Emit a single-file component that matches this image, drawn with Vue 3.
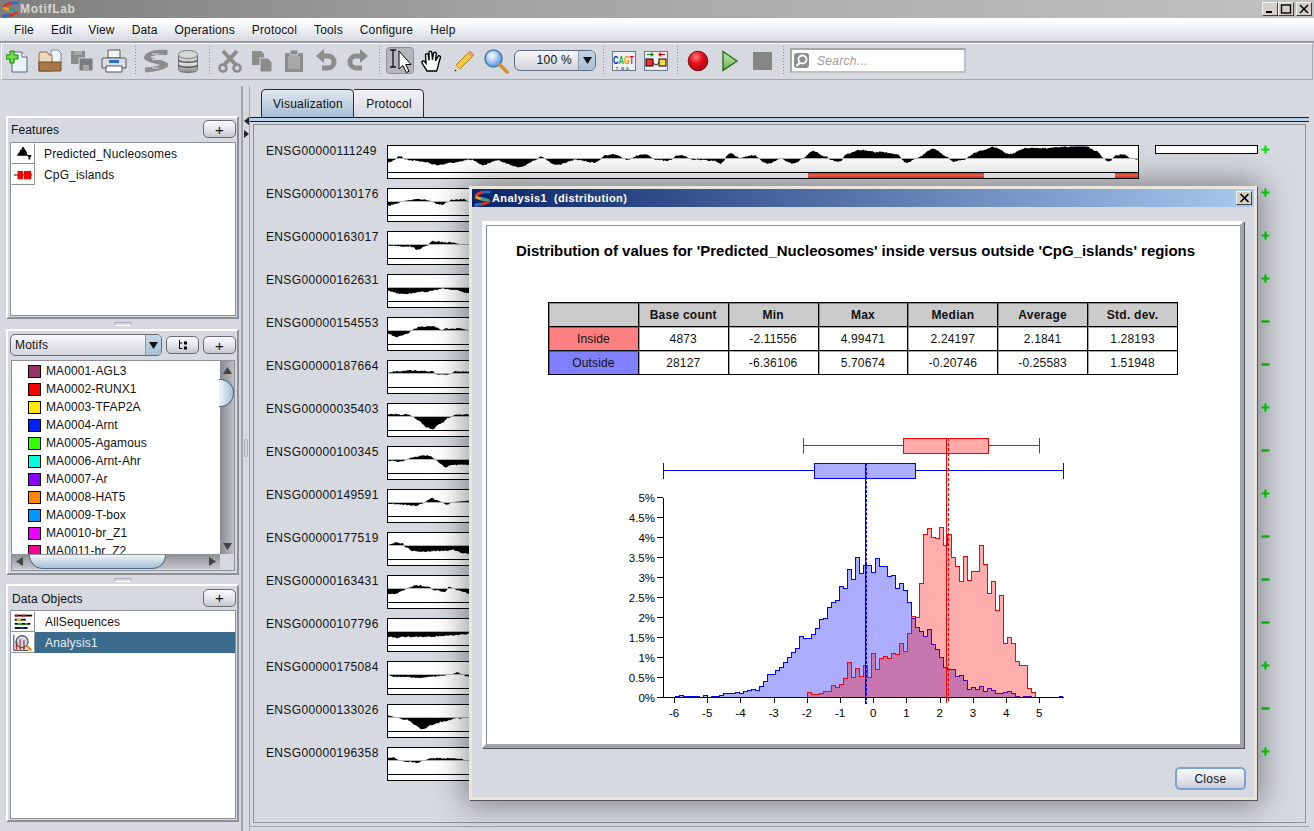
<script setup>
const menus = ['File', 'Edit', 'View', 'Data', 'Operations', 'Protocol', 'Tools', 'Configure', 'Help']
const motifs = [
  ['MA0001-AGL3', '#993366'], ['MA0002-RUNX1', '#ff0000'], ['MA0003-TFAP2A', '#ffe800'], ['MA0004-Arnt', '#0020ff'],
  ['MA0005-Agamous', '#33ff00'], ['MA0006-Arnt-Ahr', '#00ffdd'], ['MA0007-Ar', '#8800ff'], ['MA0008-HAT5', '#ff8800'],
  ['MA0009-T-box', '#0099ff'], ['MA0010-br_Z1', '#ee00ff'], ['MA0011-br_Z2', '#ff0099']
]

const z1 = (zx) => zx / 3 + 380 - 387
const z2 = (zx) => zx / 3 + 780 - 387
const first = [
  [22, -4], [60, 1], [80, -1], [130, -3], [170, -6], [220, -4], [270, -1], [310, -6], [350, -2], [420, -8], [470, -1], [480, 1],
  [530, -6], [590, -1], [640, -4], [680, 2], [700, 3], [740, -1], [790, 3], [830, -1], [860, -2], [900, 2], [940, -1], [1000, -2],
  [1020, -5], [1050, 4], [1080, 0], [1120, 2], [1165, -5], [1195, -1]
].map(([x, v]) => [z1(x), v]).concat([
  [0, 0], [40, -5], [70, 0], [100, 6], [135, 1], [160, -2], [180, -3], [200, 3], [240, 7], [300, 5], [350, 3], [380, -4], [410, 0],
  [460, 8], [500, 1], [520, -3], [550, -1], [600, 6], [640, 10], [690, 3], [740, 9], [800, 9], [860, 10], [910, 12], [950, 6],
  [970, 0], [985, -3], [1010, 2], [1030, 3], [1050, 0], [1075, -1]
].map(([x, v]) => [z2(x), v]))

const trackDefs = [
  ['ENSG00000111249', first, '+'],
  ['ENSG00000130176', [[0, -4], [10, -2], [15, 0], [30, 1], [35, 1], [45, 0], [50, -2], [55, -3], [60, -1], [65, 1], [75, 1], [82, 0]], '+'],
  ['ENSG00000163017', [[0, -1], [25, -2], [30, -5], [40, -1], [45, 2], [60, 1], [75, 0], [82, 0]], '+'],
  ['ENSG00000162631', [[0, -3], [15, -6], [40, -4], [50, -2], [55, -1], [65, -2], [82, -5]], '+'],
  ['ENSG00000154553', [[0, -3], [10, -6], [20, -3], [25, 0], [35, 3], [45, 3], [55, 0], [60, 1], [70, 1], [82, 0]], '-'],
  ['ENSG00000187664', [[0, 0], [10, 1], [25, 2], [45, 1], [50, -1], [60, -1], [70, 1], [82, 1]], '-'],
  ['ENSG00000035403', [[0, 1], [20, 1], [25, 0], [30, -3], [40, -10], [45, -12], [55, -6], [62, -1], [70, 1], [82, 1]], '+'],
  ['ENSG00000100345', [[0, -1], [15, -2], [20, 0], [30, 2], [40, 3], [48, 0], [52, -3], [58, -7], [65, -5], [82, -5]], '-'],
  ['ENSG00000149591', [[0, -1], [15, -2], [28, -3], [35, -1], [45, 3], [50, 1], [55, 0], [60, -2], [65, 0], [82, 0.5]], '+'],
  ['ENSG00000177519', [[0, 0], [10, 2], [15, 1], [20, -2], [25, -5], [35, -6], [50, -5], [60, -5], [65, -4], [70, -5], [75, -7], [82, -8]], '-'],
  ['ENSG00000163431', [[0, -5], [10, -5], [15, -2], [20, 0], [30, 2], [40, 1], [50, -2], [58, -3], [62, 1], [66, 0], [72, -2], [82, -5]], '-'],
  ['ENSG00000107796', [[0, -5], [10, -6], [15, -5], [25, -5], [40, -5], [60, -4], [82, -2]], '-'],
  ['ENSG00000175084', [[0, 0], [5, -2], [20, -2], [30, -3], [45, -2], [65, 0], [70, 1], [75, 0], [82, -2]], '+'],
  ['ENSG00000133026', [[0, 1], [8, 0], [20, -2], [30, -8], [35, -11], [45, -7], [55, -4], [70, -1], [82, 0]], '-'],
  ['ENSG00000196358', [[0, 1], [5, 2], [12, 0], [20, -1], [30, -2], [38, 0], [45, 1], [60, 1], [72, 1], [78, 0], [82, 0]], '+']
]

function profile(pts, seed) {
  const base = 13
  const last = pts[pts.length - 1][0]
  let d = `M1 ${base}`
  let s = seed * 97 + 13
  let j = 0
  for (let x = 1; x <= Math.min(last, 751); x += 1) {
    while (j < pts.length - 2 && pts[j + 1][0] < x) j++
    const [x0, v0] = pts[j]
    const [x1, v1] = pts[j + 1]
    const t = Math.max(0, Math.min(1, (x - x0) / (x1 - x0 || 1)))
    const e = t * t * (3 - 2 * t)
    s = (s * 9301 + 49297) % 233280
    const n = (s / 233280 - 0.5) * 1.3
    let v = v0 + (v1 - v0) * e
    v = v * 1.05 + Math.sign(v) * Math.min(0.6, Math.abs(v)) + n * Math.min(1, Math.abs(v) + 0.2)
    v = Math.min(11.6, v)
    d += `L${x} ${(base - v).toFixed(1)}`
  }
  return d + `L${Math.min(last, 751)} ${base}Z`
}

const tracks = trackDefs.map(([name, pts, sign], i) => ({ name, sign, d: profile(pts, i), first: i === 0 }))

const blueY = [802, 802, 802, 799, 796, 799, 799, 799, 799, 802, 796, 802, 799, 799, 796, 790, 790, 790, 787, 790, 784, 781, 778, 781, 769, 754, 733, 733, 721, 712, 697, 682, 667, 655, 619, 625, 625, 613, 595, 568, 565, 532, 517, 511, 469, 475, 418, 448, 382, 430, 406, 406, 427, 385, 409, 409, 439, 436, 475, 460, 481, 517, 565, 592, 604, 619, 598, 643, 658, 682, 712, 718, 718, 739, 736, 751, 778, 772, 778, 769, 784, 775, 781, 790, 790, 787, 784, 790, 799, 802, 799, 799, 802, 802, 802, 802, 802, 802, 802, 799]
const redY = [802, 787, 793, 793, 790, 784, 784, 766, 772, 763, 745, 697, 742, 715, 739, 706, 742, 670, 718, 685, 679, 685, 670, 673, 640, 664, 610, 559, 562, 460, 313, 295, 322, 325, 292, 346, 313, 382, 409, 454, 379, 451, 424, 424, 346, 403, 490, 454, 541, 496, 640, 622, 640, 694, 706, 706, 775, 787, 802, 802]

function hist(ys, startZx) {
  let d = ''
  const X = (z) => (630 + z / 3).toFixed(1)
  const Y = (z) => (430 + z / 3).toFixed(1)
  ys.forEach((y, i) => {
    const z = startZx + i * 12
    d += `${i ? 'L' : 'M'}${X(z)} ${Y(y)}L${X(z + 12)} ${Y(y)}`
  })
  return d
}
const closeHist = (d, startZx, n) => `M${(630 + startZx / 3).toFixed(1)} 697.7${d.replace(/^M/, 'L')}L${(630 + (startZx + n * 12) / 3).toFixed(1)} 697.7Z`
const blueLine = hist(blueY, 100)
const redLine = hist(redY, 520)
const blueFill = closeHist(blueLine, 100, blueY.length)
const redFill = closeHist(redLine, 520, redY.length)

const yTicks = ['0%', '0.5%', '1%', '1.5%', '2%', '2.5%', '3%', '3.5%', '4%', '4.5%', '5%'].map((t, i) => ({ t, y: 697.7 - i * 19.94 }))
const xTicks = [-6, -5, -4, -3, -2, -1, 0, 1, 2, 3, 4, 5].map((v, i) => ({ v, x: 674 + i * 33.21 }))

const stats = [
  { label: 'Inside', cls: 'inside', vals: ['4873', '-2.11556', '4.99471', '2.24197', '2.1841', '1.28193'] },
  { label: 'Outside', cls: 'outside', vals: ['28127', '-6.36106', '5.70674', '-0.20746', '-0.25583', '1.51948'] }
]
const heads = ['Base count', 'Min', 'Max', 'Median', 'Average', 'Std. dev.']
</script>

<template>
  <div class="app">
    <svg class="defs" width="0" height="0" aria-hidden="true">
      <defs>
        <symbol id="dna" viewBox="0 0 24 24">
          <path d="M23 3C14 2 4 4 2.500 9" fill="none" stroke="#1f6fd0" stroke-width="4" />
          <path d="M13 3.200C8 4 4 6 2.500 9" fill="none" stroke="#e03020" stroke-width="4" />
          <path d="M2.500 9C6 14 16 12 22 16" fill="none" stroke="#f0a020" stroke-width="4" />
          <path d="M10 12C14 12.600 18 13.500 22 16" fill="none" stroke="#20a0a0" stroke-width="4" />
          <path d="M22 16C16 20 8 20.500 1 21.500" fill="none" stroke="#e03020" stroke-width="4" />
          <path d="M11 19.600C8 20.400 5 21 1 21.500" fill="none" stroke="#1f6fd0" stroke-width="4" />
        </symbol>
        <linearGradient id="redbar" x1="0" y1="0" x2="0" y2="1">
          <stop offset="0" stop-color="#ff3a24" /><stop offset=".5" stop-color="#ff7058" /><stop offset="1" stop-color="#ff3018" />
        </linearGradient>
        <radialGradient id="rec" cx=".4" cy=".3" r=".75">
          <stop offset="0" stop-color="#ff8080" /><stop offset=".45" stop-color="#e8101a" /><stop offset="1" stop-color="#a00010" />
        </radialGradient>
        <linearGradient id="play" x1="0" y1="0" x2="0" y2="1">
          <stop offset="0" stop-color="#c8e8a8" /><stop offset="1" stop-color="#6cb050" />
        </linearGradient>
        <radialGradient id="glass" cx=".4" cy=".35" r=".7">
          <stop offset="0" stop-color="#ffffff" /><stop offset="1" stop-color="#4a90e0" />
        </radialGradient>
        <linearGradient id="steel" x1="0" y1="0" x2="0" y2="1">
          <stop offset="0" stop-color="#b0b0b0" /><stop offset=".5" stop-color="#e0e0e0" /><stop offset="1" stop-color="#808080" />
        </linearGradient>
      </defs>
    </svg>

    <header class="titlebar">
      <svg class="logo" width="17" height="17" viewBox="0 0 24 24"><use href="#dna" /></svg>
      <span class="app-name">MotifLab</span>
      <div class="win-btns">
        <span class="win-btn"><svg width="12" height="10" viewBox="0 0 12 10"><path d="M2 8h6" stroke="#000" stroke-width="2" /></svg></span>
        <span class="win-btn"><svg width="12" height="10" viewBox="0 0 12 10"><rect x="1.5" y="1" width="9" height="8" fill="none" stroke="#000" stroke-width="1.4" /></svg></span>
        <span class="win-btn close-gap"><svg width="12" height="10" viewBox="0 0 12 10"><path d="M2 1l8 8M10 1l-8 8" stroke="#000" stroke-width="1.5" /></svg></span>
      </div>
    </header>

    <nav class="menubar">
      <span v-for="m in menus" :key="m">{{ m }}</span>
    </nav>

    <div class="toolbar">
      <div class="group">
        <span class="slot"><svg width="24" height="24" viewBox="0 0 24 24"><path d="M6 3h10l5 5v15H6z" fill="#eaf1f8" stroke="#53687c" /><path d="M16 3v5h5" fill="#fff" stroke="#53687c" /><path d="M4 2h4v4h4v4H8v4H4v-4H0V6h4z" fill="#6ee040" stroke="#1b7d10" /></svg></span>
        <span class="slot"><svg width="24" height="24" viewBox="0 0 24 24"><path d="M13 1h7l3 3v10H13z" fill="#f0f4fa" stroke="#7a8a9a" /><path d="M1 5l1-2h7l2 3h3v16H1z" fill="#ecd9bc" stroke="#8a6a48" /><path d="M1 13h22v8a1 1 0 0 1-1 1H1z" fill="#a8774a" stroke="#6e4a28" /></svg></span>
        <span class="slot"><svg width="24" height="24" viewBox="0 0 24 24"><path d="M1 2h14v13H1z" fill="#8a8a8a" /><path d="M4 2h8v4H4z" fill="#a8a8a8" /><path d="M9 9h14v13H9z" fill="#7c7c7c" stroke="#d6d9e0" /><path d="M13 16h6v6h-6z" fill="#a8a8a8" /></svg></span>
        <span class="slot"><svg width="26" height="24" viewBox="0 0 26 24"><path d="M7 1h12v8H7z" fill="#f4f4f4" stroke="#555" /><path d="M2 9h22a1 1 0 0 1 1 1v9H1v-9a1 1 0 0 1 1-1z" fill="#d8dee6" stroke="#555" /><path d="M8 11h10v3H8z" fill="#2a6ec8" /><path d="M5 17h16v6H5z" fill="#fff" stroke="#555" /></svg></span>
      </div>
      <i class="sep"></i>
      <div class="group">
        <span class="slot"><svg width="24" height="24" viewBox="0 0 24 24"><path d="M23.500 3.500C14 2.500 4 4 2.500 8.500C6 13 16 11.500 22 16C16 20 8 20.500 1 21" fill="none" stroke="#8c8c8c" stroke-width="5" /><path d="M8 5h7M8 10.500h7M8 19h7" stroke="#d6d9e0" stroke-width="1.200" /></svg></span>
        <span class="slot"><svg width="22" height="24" viewBox="0 0 22 24"><ellipse cx="11" cy="6" rx="9.5" ry="4.5" fill="url(#steel)" stroke="#777" /><path d="M1.5 6v14c0 2.5 4 3.5 9.5 3.5s9.500-1 9.500-3.500V6" fill="url(#steel)" stroke="#777" /><path d="M1.500 11c1 3 18 3 19 0M1.500 16c1 3 18 3 19 0" fill="none" stroke="#555" stroke-width="1.400" /><ellipse cx="11" cy="5.500" rx="9.500" ry="4" fill="#d8d8d8" stroke="#888" /></svg></span>
      </div>
      <i class="sep"></i>
      <div class="group">
        <span class="slot"><svg width="24" height="24" viewBox="0 0 24 24"><path d="M5 2l14 15M19 2L5 17" stroke="#8c8c8c" stroke-width="4" /><circle cx="5" cy="19" r="3.500" fill="none" stroke="#8c8c8c" stroke-width="2.600" /><circle cx="19" cy="19" r="3.500" fill="none" stroke="#8c8c8c" stroke-width="2.600" /></svg></span>
        <span class="slot"><svg width="22" height="24" viewBox="0 0 22 24"><path d="M1 2h9l3 3v11H1z" fill="#8c8c8c" /><path d="M9 9h8l4 4v10H9z" fill="#8c8c8c" stroke="#d6d9e0" /></svg></span>
        <span class="slot"><svg width="22" height="24" viewBox="0 0 22 24"><path d="M2 4h18v19H2z" fill="#8c8c8c" /><path d="M5 7h12v13H5z" fill="#a8a8a8" /><path d="M7 1h8v5H7z" fill="#8c8c8c" stroke="#d6d9e0" /></svg></span>
        <span class="slot"><svg width="22" height="24" viewBox="0 0 22 24"><path d="M6 7h7a6 6 0 0 1 0 12H7" fill="none" stroke="#8c8c8c" stroke-width="5" /><path d="M9 0L1 7l8 7z" fill="#8c8c8c" /></svg></span>
        <span class="slot"><svg width="22" height="24" viewBox="0 0 22 24"><path d="M16 7H9a6 6 0 0 0 0 12h6" fill="none" stroke="#8c8c8c" stroke-width="5" /><path d="M13 0l8 7-8 7z" fill="#8c8c8c" /></svg></span>
      </div>
      <i class="sep"></i>
      <div class="group">
        <span class="slot pressed"><svg width="26" height="26" viewBox="0 0 26 26"><path d="M3 2h6M6 2v17M3 19h6" fill="none" stroke="#111" stroke-width="1.300" /><path d="M12 3v18l4-3.500 3.200 7 2.800-1.200-3.200-6.800h5.200z" fill="#fff" stroke="#000" /></svg></span>
        <span class="slot"><svg width="24" height="24" viewBox="0 0 24 24"><path d="M7 22C5 18 1 14 2 12.500C3 11 5 12.500 6 14L5.500 6a1.400 1.400 0 0 1 2.800 0L9 11.500L9 3.500a1.400 1.400 0 0 1 2.800 0L12.500 11L13.500 4.500a1.400 1.400 0 0 1 2.800.3L15.500 12L18 7.500a1.300 1.300 0 0 1 2.400 1L18.500 15C18 18 17.500 20 16.500 22Z" fill="#fff" stroke="#000" stroke-width="1.400" /></svg></span>
        <span class="slot"><svg width="22" height="24" viewBox="0 0 22 24"><path d="M17 2l4 4L7 20l-4-4z" fill="#f4c83a" stroke="#8a6a10" stroke-width=".8" /><path d="M3 16l4 4-5 2z" fill="#e8d0a0" /><path d="M1.500 22.500l2-.7-1.300-1.300z" fill="#000" /><path d="M17 2l4 4-2 2-4-4z" fill="#e89878" /></svg></span>
        <span class="slot"><svg width="26" height="26" viewBox="0 0 26 26"><circle cx="10.500" cy="10.500" r="8.500" fill="url(#glass)" stroke="#4a78b0" stroke-width="1.600" /><path d="M17 17l7 7" stroke="#d89020" stroke-width="3.600" stroke-linecap="round" /></svg></span>
      </div>
      <div class="zoom-combo"><span class="zoom-val">100 %</span><span class="zoom-arrow"><svg width="9" height="7" viewBox="0 0 9 7"><path d="M0 0h9L4.500 7z" fill="#111" /></svg></span></div>
      <i class="sep wide"></i>
      <div class="group tight">
        <span class="logo-box"><svg width="22" height="18" viewBox="0 0 22 18">
          <g transform="scale(1 1.500)"><text x="0" y="8" class="lg" fill="#0020e0">C</text><text x="5.500" y="8" class="lg" fill="#20b020">A</text><text x="11" y="8" class="lg" fill="#f09000">G</text><text x="16.500" y="8" class="lg" fill="#e01020">T</text></g>
          <text x="3" y="17.500" class="ls" fill="#e01020">T</text><text x="8" y="17.500" class="ls" fill="#0020e0">G</text><text x="13" y="17.500" class="ls" fill="#20b020">A</text>
        </svg></span>
        <span class="logo-box"><svg width="22" height="18" viewBox="0 0 22 18"><path d="M2 2.500h6M6 .8l2 1.700-2 1.700" fill="none" stroke="#009000" stroke-width="1.200" /><path d="M14 2.500h6M16 .8l-2 1.700 2 1.700" fill="none" stroke="#e00000" stroke-width="1.200" /><rect x="1" y="7" width="7" height="7" fill="#f03030" stroke="#000" /><rect x="14" y="7" width="7" height="7" fill="#ffd840" stroke="#000" /><path d="M8 10.500c2 3 4 3 6 0" fill="none" stroke="#000" /></svg></span>
      </div>
      <i class="sep mid"></i>
      <div class="group">
        <span class="slot"><svg width="22" height="22" viewBox="0 0 22 22"><circle cx="11" cy="11" r="9.800" fill="url(#rec)" stroke="#801018" /></svg></span>
        <span class="slot"><svg width="18" height="22" viewBox="0 0 18 22"><path d="M2 1.500L16 11 2 20.500z" fill="url(#play)" stroke="#1c6a10" stroke-width="1.300" /></svg></span>
        <span class="slot"><span class="stop"></span></span>
      </div>
      <i class="sep"></i>
      <div class="search">
        <span class="search-ic"><svg width="13" height="13" viewBox="0 0 13 13"><circle cx="7.500" cy="5.500" r="4" fill="none" stroke="#fff" stroke-width="1.800" /><path d="M5 8.500L1.500 12" stroke="#fff" stroke-width="2.200" /></svg></span>
        <span class="search-txt">Search...</span>
      </div>
    </div>

    <div class="main">
      <aside class="left">
        <section class="panel p-features">
          <div class="panel-head"><span>Features</span><button class="mini">+</button></div>
          <div class="list">
            <div class="row">
              <span class="row-ic"><svg width="24" height="20" viewBox="0 0 24 20"><path d="M2 12h3l1-1 1-2 1-1 1-3 1 1 1-3 1-1 1 1 1 2 1 1 1 2 1 3h4v2h-1v3h-2v-3l-1-1H2z" fill="#000" /></svg></span>
              <span class="row-txt">Predicted_Nucleosomes</span>
            </div>
            <div class="row">
              <span class="row-ic"><svg width="24" height="20" viewBox="0 0 24 20"><path d="M2 10h20" stroke="#000" /><path d="M6 5.500h6v9H6zM13 5.500h8v9h-8z" fill="#f00000" /></svg></span>
              <span class="row-txt">CpG_islands</span>
            </div>
          </div>
        </section>
        <div class="hsplit"><i></i></div>
        <section class="panel p-motifs">
          <div class="motif-head">
            <div class="combo"><span class="combo-txt">Motifs</span><span class="combo-arrow"><svg width="9" height="7" viewBox="0 0 9 7"><path d="M0 0h9L4.500 7z" fill="#111" /></svg></span></div>
            <button class="mini"><svg width="10" height="10" viewBox="0 0 10 10"><path d="M1.500 0v9M1.500 3h3M1.500 8.500h3" fill="none" stroke="#000" /><path d="M6 1.500h3v3H6zM6 6.500h3v3H6z" fill="#000" /></svg></button>
            <button class="mini">+</button>
          </div>
          <div class="motif-box">
            <div class="motif-list">
              <div v-for="[name, color] in motifs" :key="name" class="motif">
                <i class="swatch" :style="{ background: color }"></i><span>{{ name }}</span>
              </div>
            </div>
            <div class="vscroll">
              <svg width="9" height="7" viewBox="0 0 9 7"><path d="M4.500 0L9 7H0z" fill="#444" /></svg>
              <i class="vthumb"></i>
              <i class="vrest"></i>
              <svg width="9" height="7" viewBox="0 0 9 7"><path d="M0 0h9L4.500 7z" fill="#444" /></svg>
            </div>
            <div class="hscroll">
              <svg width="7" height="9" viewBox="0 0 7 9"><path d="M7 0v9L0 4.500z" fill="#444" /></svg>
              <i class="hthumb"></i>
              <i class="hrest"></i>
              <svg width="7" height="9" viewBox="0 0 7 9"><path d="M0 0v9l7-4.500z" fill="#444" /></svg>
            </div>
            <div class="corner"></div>
          </div>
        </section>
        <div class="hsplit second"><i></i></div>
        <section class="panel p-data">
          <div class="panel-head data-head"><span>Data Objects</span><button class="mini">+</button></div>
          <div class="list data-list">
            <div class="row">
              <span class="row-ic"><svg width="24" height="20" viewBox="0 0 24 20"><path d="M3 3h19" stroke="#000" stroke-width="2" /><path d="M3 3h4M11 3h4" stroke="#f00000" stroke-width="2" /><path d="M3 7.500h12" stroke="#000" stroke-width="2" /><path d="M5 7.500h5" stroke="#f0d000" stroke-width="2" /><path d="M3 12h17" stroke="#000" stroke-width="2" /><path d="M6 12h5M14 12h3" stroke="#10c010" stroke-width="2" /><path d="M3 16.500h14" stroke="#000" stroke-width="2" /><path d="M9 16.500h4" stroke="#1030f0" stroke-width="2" /></svg></span>
              <span class="row-txt">AllSequences</span>
            </div>
            <div class="row selected">
              <span class="row-ic"><svg width="24" height="20" viewBox="0 0 24 20"><path d="M4 8h2v9H4zM8 6h2v11H8zM12 7h2v10h-2z" fill="#d02020" /><path d="M2 1v17h16" fill="none" stroke="#222" /><circle cx="11" cy="8.500" r="6.500" fill="#9ab0d8" fill-opacity=".45" stroke="#555" stroke-width="1.400" /><path d="M16 13l5 5" stroke="#e08a20" stroke-width="2.600" /></svg></span>
              <span class="row-txt">Analysis1</span>
            </div>
          </div>
        </section>
      </aside>

      <div class="vsplit">
        <svg class="arr1" width="5" height="8" viewBox="0 0 5 8"><path d="M5 0v8L0 4z" fill="#222" /></svg>
        <svg class="arr2" width="5" height="8" viewBox="0 0 5 8"><path d="M0 0v8l5-4z" fill="#222" /></svg>
        <i class="vgrip"></i>
      </div>

      <div class="right">
        <div class="tabs">
          <span class="tab active">Visualization</span>
          <span class="tab">Protocol</span>
        </div>
        <div class="tabband"></div>
        <div class="canvas">
          <div v-for="t in tracks" :key="t.name" class="track-row">
            <span class="track-name">{{ t.name }}</span>
            <svg class="track" width="752" height="34" viewBox="0 0 752 34">
              <rect x=".5" y=".5" width="751" height="33" fill="#fff" stroke="#000" />
              <path :d="t.d" fill="#000" />
              <path d="M1 13.500h750" stroke="#b4b4b4" />
              <path d="M1 27.500h750" stroke="#000" />
              <template v-if="t.first">
                <rect x="421" y="28" width="176" height="5" fill="url(#redbar)" />
                <rect x="728" y="28" width="23" height="5" fill="url(#redbar)" />
              </template>
            </svg>
            <span class="meter" :class="{ ghost: !t.first }"></span>
            <svg class="sign" width="9" height="9" viewBox="0 0 9 9">
              <path v-if="t.sign === '+'" d="M4.500 .5v8M.5 4.500h8" stroke="#00e000" stroke-width="2.200" />
              <path v-else d="M.5 4.500h8" stroke="#00d000" stroke-width="2.200" />
            </svg>
          </div>
        </div>
        <div class="footline"></div>
      </div>
    </div>

    <div class="dialog">
      <div class="dlg-title">
        <svg width="17" height="17" viewBox="0 0 24 24"><use href="#dna" /></svg>
        <span class="dlg-name">Analysis1&nbsp; (distribution)</span>
        <span class="dlg-x"><svg width="11" height="10" viewBox="0 0 11 10"><path d="M1.500 1l8 8M9.500 1l-8 8" stroke="#000" stroke-width="1.700" /></svg></span>
      </div>
      <div class="dlg-frame">
        <div class="dlg-plot">
          <h2 class="plot-title">Distribution of values for 'Predicted_Nucleosomes' inside versus outside 'CpG_islands' regions</h2>
          <table class="stats">
            <tr><th></th><th v-for="h in heads" :key="h">{{ h }}</th></tr>
            <tr v-for="s in stats" :key="s.label">
              <td :class="s.cls">{{ s.label }}</td>
              <td v-for="(v, i) in s.vals" :key="i">{{ v }}</td>
            </tr>
          </table>
          <svg class="chart" width="470" height="295" viewBox="620 430 470 295">
            <path :d="blueFill" fill="#0000ff" fill-opacity=".32" shape-rendering="crispEdges" />
            <path :d="blueLine" fill="none" stroke="#0000ff" stroke-width="1" shape-rendering="crispEdges" />
            <path :d="redFill" fill="#ff0000" fill-opacity=".32" shape-rendering="crispEdges" />
            <path :d="redLine" fill="none" stroke="#ff0000" stroke-width="1" shape-rendering="crispEdges" />

            <path d="M803.500 438v15.500M1039.500 438v15.500M803.500 445.500H903.500M988.500 445.500H1039.500" stroke="#ff0000" fill="none" />
            <rect x="903.500" y="438.500" width="85" height="15" fill="#ffabab" stroke="#ff0000" />
            <path d="M663.500 463v16M1063.500 463v16M663.500 470.500H814.500M915.500 470.500H1063.500" stroke="#0000ff" fill="none" />
            <rect x="814.500" y="463.500" width="101" height="15" fill="#adadff" stroke="#0000ff" />

            <path d="M865.500 463v241" stroke="#0000ff" />
            <path d="M866.500 463v241" stroke="#0000ff" stroke-dasharray="3 1.500" />
            <path d="M946.500 438v265" stroke="#ff0000" />
            <path d="M948.500 438v265" stroke="#ff0000" stroke-dasharray="3 2" />

            <path d="M663.500 498v200M663 697.500h401" stroke="#000" fill="none" />
            <g v-for="t in yTicks" :key="t.t">
              <path :d="`M657 ${Math.round(t.y) - 0.5}h6`" stroke="#000" />
              <text :x="655" :y="t.y + 4" text-anchor="end" class="tick">{{ t.t }}</text>
            </g>
            <g v-for="t in xTicks" :key="t.v">
              <path :d="`M${Math.round(t.x) + 0.5} 698v5`" stroke="#000" />
              <text :x="t.x" :y="717" text-anchor="middle" class="tick">{{ t.v }}</text>
            </g>
          </svg>
        </div>
      </div>
      <div class="dlg-foot"><button class="close-btn">Close</button></div>
    </div>
  </div>
</template>

<style scoped>
.app {
  width: 1314px;
  height: 831px;
  position: relative;
  overflow: hidden;
  display: flex;
  flex-direction: column;
  background: #d6d9e0;
  font: 12px "Liberation Sans", Arial, sans-serif;
  color: #111;
}
.defs { position: absolute; }

.titlebar {
  height: 18px;
  flex: none;
  display: flex;
  align-items: center;
  padding-left: 2px;
  background: linear-gradient(90deg, #7e7e7e, #a4a4a4 40%, #c2c2c2);
}
.app-name { margin-left: 1px; font-weight: bold; font-size: 12px; color: #d8d5cb; letter-spacing: .7px; }
.win-btns { margin-left: auto; display: flex; padding-right: 2px; }
.win-btn {
  width: 16px;
  height: 14px;
  box-sizing: border-box;
  display: flex;
  align-items: center;
  justify-content: center;
  background: #d4d0c8;
  border: 1px solid;
  border-color: #f4f4f0 #404040 #404040 #f4f4f0;
}
.close-gap { margin-left: 2px; }

.menubar {
  height: 23px;
  flex: none;
  display: flex;
  align-items: center;
  gap: 17px;
  padding-left: 14px;
  background: linear-gradient(#ffffff 10%, #f3f4f7 40%, #d6d9e0);
  border-bottom: 2px solid #9a9ca2;
  letter-spacing: .15px;
}
.menubar span:nth-child(2) { margin-right: -1px; }

.toolbar {
  height: 37px;
  flex: none;
  margin: 0 1px;
  padding-bottom: 2px;
  display: flex;
  align-items: center;
  border: 1px solid;
  border-color: #fff #a6a8ae #a6a8ae #fff;
  border-top: 1px solid #fff;
  box-sizing: border-box;
}
.group { display: flex; align-items: center; }
.group.tight { gap: 8px; margin-left: 4px; }
.slot { width: 32px; height: 27px; display: flex; align-items: center; justify-content: center; }
.pressed {
  width: 28px;
  margin: 0 2px;
  background: #b4b7bf;
  border-radius: 4px;
  box-sizing: border-box;
  border: 1px solid #8d9099;
}
.sep {
  width: 1px;
  height: 30px;
  margin: 0 4px 0 5px;
  background: repeating-linear-gradient(#888 0 1px, transparent 1px 3px);
}
.sep.wide { margin-left: 7px; }
.sep.mid { margin-left: 9px; }
.zoom-combo {
  width: 82px;
  height: 21px;
  margin-left: 2px;
  box-sizing: border-box;
  display: flex;
  border: 1px solid #5c6c80;
  border-radius: 6px;
  overflow: hidden;
  background: linear-gradient(#f6f7f9, #d0d4dc);
}
.zoom-val { flex: 1; text-align: right; padding-right: 6px; line-height: 19px; font-size: 12px; letter-spacing: .3px; }
.zoom-arrow { width: 16px; display: flex; align-items: center; justify-content: center; background: linear-gradient(#c4d4e4, #a8c0d8); border-left: 1px solid #8a98a8; }
.logo-box {
  width: 24px;
  height: 20px;
  box-sizing: border-box;
  display: flex;
  align-items: center;
  justify-content: center;
  overflow: hidden;
  border: 1px solid #6a7888;
  background: #eef0f4;
}
.lg { font: bold 7.500px "Liberation Sans", sans-serif; }
.ls { font: bold 4px "Liberation Sans", sans-serif; }
.stop { width: 19px; height: 18px; background: #868686; }
.search {
  width: 176px;
  height: 25px;
  margin-left: 2px;
  box-sizing: border-box;
  display: flex;
  align-items: center;
  background: #fff;
  border: 2px solid;
  border-color: #a8a8a8 #c0c0c0 #c0c0c0 #a8a8a8;
}
.search-ic { width: 15px; height: 15px; margin-left: 2px; border-radius: 3px; background: #8e8e8e; display: flex; align-items: center; justify-content: center; }
.search-txt { margin-left: 8px; font-style: italic; color: #9a9a9a; font-size: 12px; letter-spacing: .3px; }

.main { flex: 1; min-height: 0; display: flex; }
.left { width: 233px; margin: 36px 0 0 6px; flex: none; display: flex; flex-direction: column; }
.panel {
  box-sizing: border-box;
  border: 2px solid;
  border-color: #fff #8d9099 #8d9099 #fff;
  padding: 0 1px 1px 2px;
  display: flex;
  flex-direction: column;
}
.p-features { height: 203px; }
.p-motifs { height: 246px; }
.p-data { height: 238px; }
.panel-head {
  height: 24px;
  flex: none;
  box-sizing: border-box;
  display: flex;
  align-items: center;
  justify-content: space-between;
  padding: 0 0 2px 1px;
  letter-spacing: .1px;
}
.panel-head span { padding-top: 2px; }
.data-head { padding-left: 2px; padding-bottom: 1px; }
.mini {
  width: 33px;
  height: 18px;
  padding: 0;
  display: flex;
  align-items: center;
  justify-content: center;
  box-sizing: border-box;
  border: 1px solid #6a6c74;
  border-radius: 5px;
  background: linear-gradient(#fafafc, #e4e6eb 50%, #c4c7cf);
  font: 15px/1 "Liberation Sans", sans-serif;
  color: #111;
}
.list { flex: 1; min-height: 0; background: #fff; border: 1px solid #8d9099; overflow: hidden; }
.row { height: 21px; display: flex; align-items: center; }
.row-ic {
  width: 24px;
  height: 21px;
  box-sizing: border-box;
  display: flex;
  align-items: center;
  justify-content: center;
  background: #fff;
  border: 1px solid;
  border-color: #fff #8d9099 #8d9099 #fff;
}
.row-txt { margin-left: 9px; letter-spacing: .15px; }
.data-list .row-txt { margin-left: 10px; }
.selected { background: #3a6a8c; color: #e8eef4; }

.hsplit { height: 10px; flex: none; display: flex; align-items: center; justify-content: center; }
.hsplit.second { height: 9px; }
.hsplit i { width: 18px; height: 4px; box-sizing: border-box; border: 1px solid #a8aab2; border-bottom-color: #fff; border-radius: 2px; }

.motif-head { height: 25px; flex: none; display: flex; align-items: center; gap: 4px; box-sizing: border-box; padding-top: 3px; }
.combo {
  width: 152px;
  height: 22px;
  box-sizing: border-box;
  display: flex;
  border: 1px solid #6a6c74;
  border-radius: 5px;
  overflow: hidden;
  background: linear-gradient(#f8f9fb, #d2d5dc);
}
.combo-txt { flex: 1; padding-left: 4px; line-height: 20px; letter-spacing: .2px; }
.combo-arrow { width: 15px; display: flex; align-items: center; justify-content: center; background: linear-gradient(#c6d6e6, #a8c0d8); border-left: 1px solid #8a98a8; }
.motif-box {
  flex: 1;
  min-height: 0;
  margin: 4px 0 1px 1px;
  width: 224px;
  display: grid;
  grid-template-columns: 208px 14px;
  grid-template-rows: 193px 15px;
  border: 1px solid #8d9099;
  box-sizing: border-box;
  background: #d6d9e0;
}
.motif-list { background: #fff; overflow: hidden; padding: 1px 0 0 16px; }
.motif { height: 18px; display: flex; align-items: center; letter-spacing: .1px; }
.swatch { width: 11px; height: 11px; border: 1px solid #000; margin-right: 5px; flex: none; }
.vscroll {
  display: flex;
  flex-direction: column;
  align-items: center;
  background: linear-gradient(90deg, #888a90, #bcbec4);
  padding: 6px 0 4px;
}
.vthumb {
  width: 15px;
  height: 28px;
  margin-top: 5px;
  margin-left: -1px;
  flex: none;
  border-radius: 0 14px 14px 0;
  border: 1px solid #4a6a88;
  border-left: 0;
  box-sizing: border-box;
  background: linear-gradient(90deg, #f0f4f8, #a8c0d8);
}
.vrest { flex: 1; }
.hscroll {
  display: flex;
  align-items: center;
  padding: 0 4px;
  background: linear-gradient(#8c8e94, #c4c6cc);
}
.hthumb {
  width: 137px;
  height: 14px;
  margin-left: 6px;
  flex: none;
  border-radius: 0 0 14px 14px;
  border: 1px solid #4a6a88;
  border-top: 0;
  box-sizing: border-box;
  background: linear-gradient(#f0f4f8, #a8c0d8);
}
.hrest { flex: 1; }
.corner { background: #d6d9e0; }

.vsplit {
  width: 9px;
  margin: 6px 0 0 2px;
  flex: none;
  box-sizing: border-box;
  border-left: 2px solid #a2a4ac;
  border-right: 1px solid #a2a4ac;
  display: flex;
  flex-direction: column;
  align-items: center;
}
.arr1 { margin-top: 31px; position: relative; z-index: 1; }
.arr2 { margin-top: 5px; }
.vgrip { width: 4px; height: 18px; margin-top: 301px; box-sizing: border-box; border: 1px solid #a8aab2; border-radius: 2px; }

.right { width: 1059px; flex: none; display: flex; flex-direction: column; padding-top: 9px; box-sizing: border-box; }
.tabs { height: 28px; flex: none; display: flex; padding-left: 11px; align-items: flex-end; }
.tab {
  height: 28px;
  width: 70px;
  box-sizing: border-box;
  display: flex;
  align-items: center;
  justify-content: center;
  padding-left: 1px;
  border: 1px solid #2a2c30;
  border-left: 0;
  border-bottom: 0;
  border-radius: 0 5px 0 0;
  background: linear-gradient(#f2f3f6, #d6d9e0);
  letter-spacing: .2px;
}
.tab.active {
  width: 93px;
  border-left: 1px solid #2a2c30;
  border-radius: 5px 5px 0 0;
  background: linear-gradient(#e2e8ef, #a6bed4);
}
.tabband { height: 5px; flex: none; box-sizing: border-box; border-top: 1px solid #111c2c; border-bottom: 1px solid #111c2c; background: #bcd2ea; }
.canvas {
  width: 1053px;
  height: 699px;
  margin: 2px 0 0 3px;
  flex: none;
  box-sizing: border-box;
  border: 1px solid #8d9099;
  padding: 20px 0 0 12px;
  display: flex;
  flex-direction: column;
  gap: 9px;
}
.footline { height: 1px; margin-top: 3px; background: #a2a4ac; flex: none; }
.track-row { height: 34px; flex: none; display: flex; align-items: flex-start; }
.track-name { width: 121px; flex: none; line-height: 12px; letter-spacing: .35px; }
.track { flex: none; display: block; }
.meter { width: 103px; height: 9px; margin-left: 16px; box-sizing: border-box; border: 1px solid #000; background: #fff; flex: none; }
.meter.ghost { border: 0; background: none; }
.sign { margin-left: 3px; flex: none; }

.dialog {
  position: absolute;
  left: 469px;
  top: 186px;
  width: 788px;
  height: 614px;
  box-sizing: border-box;
  border: 3px solid #e9e6dd;
  background: #d6d9e0;
  box-shadow: 1px 1px 0 #555, 0 0 30px 4px rgba(0, 0, 0, .42);
  display: flex;
  flex-direction: column;
}
.dlg-title {
  height: 18px;
  flex: none;
  display: flex;
  align-items: center;
  padding-left: 2px;
  background: linear-gradient(90deg, #0a246a, #a6caf0);
}
.dlg-name { margin-left: 1px; color: #fff; font-weight: bold; font-size: 11px; letter-spacing: .4px; white-space: pre; }
.dlg-x {
  margin-left: auto;
  margin-right: 2px;
  width: 16px;
  height: 14px;
  box-sizing: border-box;
  display: flex;
  align-items: center;
  justify-content: center;
  background: #d4d0c8;
  border: 1px solid;
  border-color: #f4f4f0 #404040 #404040 #f4f4f0;
}
.dlg-frame {
  width: 762px;
  height: 527px;
  margin: 14px 0 0 10px;
  box-sizing: border-box;
  border: 4px solid;
  border-color: #fff #a0a2ad #a0a2ad #fff;
  box-shadow: 1px 1px 0 #555;
}
.dlg-plot {
  height: 100%;
  box-sizing: border-box;
  background: #fff;
  border-left: 1px solid #8d9099;
  border-top: 1px solid #8d9099;
  display: flex;
  flex-direction: column;
}
.plot-title { margin: 16px 0 0; font: bold 15px/17px "Liberation Sans", sans-serif; letter-spacing: -.03px; color: #000; text-align: center; padding-right: 16px; flex: none; }
.stats {
  margin: 43px 0 0 61px;
  width: 630px;
  flex: none;
  border-collapse: collapse;
  table-layout: fixed;
  font-size: 12px;
  letter-spacing: .15px;
}
.stats th, .stats td { border: 1px solid #000; height: 24px; padding: 0; text-align: center; box-sizing: border-box; box-shadow: inset 1px 1px 0 rgba(0, 0, 0, .35); }
.stats th { background: #cbcbcb; font-weight: bold; letter-spacing: .25px; }
.stats .inside { background: #ff8080; }
.stats .outside { background: #8080ff; }
.chart { display: block; margin: 55px 0 0 133px; flex: none; }
.tick { font: 11.500px "Liberation Sans", sans-serif; fill: #000; }
.dlg-foot { display: flex; justify-content: flex-end; padding: 19px 8px 0 0; }
.close-btn {
  width: 71px;
  height: 23px;
  padding: 0;
  box-sizing: border-box;
  border: 2px solid #7ba4d4;
  border-radius: 5px;
  background: linear-gradient(#f6f7f9, #e4e6ec 50%, #c8ccd6);
  font: 12px "Liberation Sans", sans-serif;
  letter-spacing: .3px;
  color: #111;
}
</style>
